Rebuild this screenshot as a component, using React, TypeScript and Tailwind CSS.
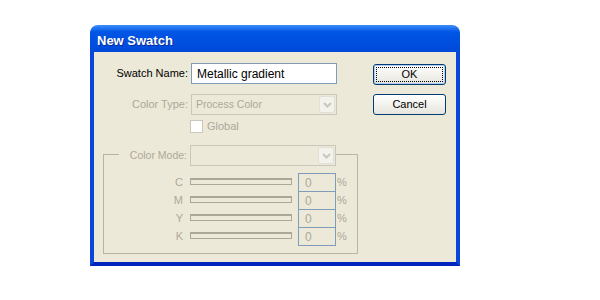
const font = { fontFamily: '"Liberation Sans", Arial, sans-serif' };

function Chevron() {
  return (
    <svg width="9" height="6" viewBox="0 0 9 6">
      <path d="M1 1 L4.5 4.5 L8 1" fill="none" stroke="#c9c7ba" strokeWidth="2" />
    </svg>
  );
}

function DisabledSelect({ text }: { text?: string }) {
  return (
    <div className="flex h-[21px] w-[146px] items-center border border-[#c9c7ba] bg-[#ece9d8] pl-[4px] pr-px">
      <span className="flex-1 text-[10.5px] text-[#aca899]">{text}</span>
      <div className="flex h-[17px] w-[16px] items-center justify-center rounded-[2px] border border-[#e2e0d6] bg-[#f3f2ec]">
        <Chevron />
      </div>
    </div>
  );
}

function SliderRow({ label, last }: { label: string; last?: boolean }) {
  return (
    <div className="flex h-[18px] items-start">
      <span className="flex h-[18px] w-[79px] items-center justify-end text-[11px] leading-none text-[#aca899]">
        {label}
      </span>
      <div className="ml-[7px] mt-[5px] h-[7px] w-[102px] border border-t-2 border-[#aca899] bg-[#ece9d8]" />
      <div
        className={`ml-[6px] flex w-[38px] items-center border-x border-t border-[#7f9db9] pl-[6px] text-[12px] leading-none text-[#aca899] ${
          last ? 'h-[19px] border-b' : 'h-[18px]'
        }`}
      >
        0
      </div>
      <span className="ml-px flex h-[18px] items-center text-[11px] leading-none text-[#aca899]">%</span>
    </div>
  );
}

export default function App() {
  return (
    <div className="h-[300px] w-[600px] bg-white pl-[90px] pt-[25px]" style={font}>
      <div className="flex h-[241px] w-[370px] flex-col overflow-hidden rounded-t-[8px]">
        <div className="flex h-[27px] shrink-0 items-center bg-gradient-to-b from-[#3d8ef8] via-[#0056e6] via-[25%] to-[#0049d9] pl-[7px] pt-[4px] text-[13px] font-bold text-white [text-shadow:1px_1px_0_#0a2a9a]">
          New Swatch
        </div>
        <div className="flex flex-1 border-x-4 border-b-4 border-[#0846dc] border-b-[#0024bd] bg-[#ece9d8]">
          <div className="flex w-[279px] flex-col pt-[11px]">
            <div className="flex h-[21px] items-center">
              <span className="w-[94px] text-right text-[11px] text-black">Swatch Name:</span>
              <div className="ml-[3px] flex h-[21px] w-[146px] items-center border border-[#7f9db9] bg-white pl-[5px] text-[12px] text-black">
                Metallic gradient
              </div>
            </div>
            <div className="mt-[10px] flex h-[21px] items-center">
              <span className="w-[94px] text-right text-[11px] text-[#aca899]">Color Type:</span>
              <div className="ml-[3px]">
                <DisabledSelect text="Process Color" />
              </div>
            </div>
            <div className="mt-[5px] flex h-[13px] items-center pl-[96px]">
              <div className="h-[13px] w-[13px] border border-[#c9c7ba] bg-white" />
              <span className="ml-[4px] text-[11px] leading-none text-[#aca899]">Global</span>
            </div>
            <div className="ml-[9px] mt-[21px] h-[100px] w-[255px] border border-[#b7b5a8]">
              <div className="-mt-[10px] flex h-[21px] items-center">
                <span className="ml-[15px] w-[71px] bg-[#ece9d8] pr-[3px] text-right text-[10.5px] text-[#aca899]">
                  Color Mode:
                </span>
                <DisabledSelect />
              </div>
              <div className="mt-[7px] flex flex-col">
                <SliderRow label="C" />
                <SliderRow label="M" />
                <SliderRow label="Y" />
                <SliderRow label="K" last />
              </div>
            </div>
          </div>
          <div className="flex flex-col gap-[9px] pt-[12px]">
            <button className="h-[21px] w-[73px] rounded-[3px] border border-[#003c74] bg-gradient-to-b from-white to-[#e6e5dd] text-[11px] text-black shadow-[inset_0_0_0_1px_#b3cbf2] outline-1 outline-offset-[-4px] outline-dotted outline-black">
              OK
            </button>
            <button className="h-[21px] w-[73px] rounded-[3px] border border-[#003c74] bg-gradient-to-b from-white to-[#e6e5dd] text-[11px] text-black">
              Cancel
            </button>
          </div>
        </div>
      </div>
    </div>
  );
}
